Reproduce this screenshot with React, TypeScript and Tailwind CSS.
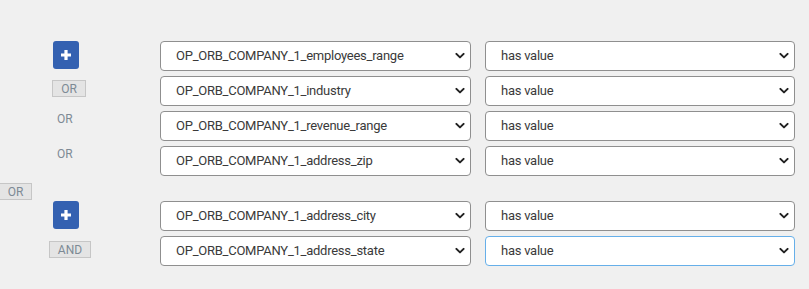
import React from 'react';

const fields = [
  'OP_ORB_COMPANY_1_employees_range',
  'OP_ORB_COMPANY_1_industry',
  'OP_ORB_COMPANY_1_revenue_range',
  'OP_ORB_COMPANY_1_address_zip',
];

const fields2 = ['OP_ORB_COMPANY_1_address_city', 'OP_ORB_COMPANY_1_address_state'];

function Chevron() {
  return (
    <svg width="10" height="7" viewBox="0 0 10 7" className="pointer-events-none absolute right-[6px] top-1/2 -translate-y-1/2">
      <path d="M1.4 1.4 L5 4.9 L8.6 1.4" fill="none" stroke="#222" strokeWidth="2" strokeLinecap="round" strokeLinejoin="round" />
    </svg>
  );
}

function Select({ value, width, focused }: { value: string; width: string; focused?: boolean }) {
  return (
    <div className={`relative h-[30px] ${width}`}>
      <select
        defaultValue={value}
        className={`h-full w-full appearance-none rounded-[4px] border bg-white pl-[15px] pr-6 text-[13px] tracking-[-0.25px] text-[#3a3a3a] outline-none ${
          focused ? 'border-[#66afe9]' : 'border-[#8f8f8f]'
        }`}
      >
        <option>{value}</option>
      </select>
      <Chevron />
    </div>
  );
}

function PlusButton() {
  return (
    <button className="ml-[53px] flex h-[28px] w-[26px] items-center justify-center rounded-[3px] bg-[#3461b1]">
      <svg width="12" height="12" viewBox="0 0 12 12">
        <path d="M6 1 V11 M1 6 H11" stroke="white" strokeWidth="3.2" />
      </svg>
    </button>
  );
}

function Badge({ label, className }: { label: string; className: string }) {
  return (
    <div
      className={`flex h-[17px] items-center justify-center border border-[#c6c6c6] bg-[#e4e4e4] text-[12px] leading-none text-[#7d8a95] ${className}`}
    >
      {label}
    </div>
  );
}

function Row({ left, field, focused }: { left: React.ReactNode; field: string; focused?: boolean }) {
  return (
    <div className="flex">
      <div className="w-[160px] shrink-0">{left}</div>
      <Select value={field} width="w-[311px]" />
      <div className="w-[14px] shrink-0" />
      <Select value="has value" width="w-[310px]" focused={focused} />
    </div>
  );
}

function OrText({ className }: { className: string }) {
  return <div className={`ml-[57px] text-[12px] leading-[12px] text-[#7d8a95] ${className}`}>OR</div>;
}

export default function App() {
  return (
    <div className="min-h-[289px] w-[809px] bg-[#f0f0f0] pt-[41px]" style={{ fontFamily: 'Roboto, "Liberation Sans", sans-serif' }}>
      <div className="flex flex-col gap-[5px]">
        <Row field={fields[0]} left={<PlusButton />} />
        <Row field={fields[1]} left={<Badge label="OR" className="ml-[52px] mt-[4px] w-[34px]" />} />
        <Row field={fields[2]} left={<OrText className="mt-[2px]" />} />
        <Row field={fields[3]} left={<OrText className="mt-[2px]" />} />
      </div>
      <Badge label="OR" className="mb-[1px] mt-[7px] w-[32px] border-l-0" />
      <div className="flex flex-col gap-[5px]">
        <Row field={fields2[0]} left={<PlusButton />} />
        <Row field={fields2[1]} left={<Badge label="AND" className="ml-[49px] mt-[5px] w-[42px]" />} focused />
      </div>
    </div>
  );
}
